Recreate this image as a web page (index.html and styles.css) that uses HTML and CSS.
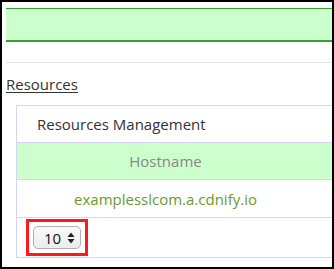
FILE: index.html
```html
<!DOCTYPE html>
<html lang="en">
  <head>
    <meta charset="UTF-8" />
    <meta name="viewport" content="width=device-width, initial-scale=1.0" />
    <title>Resources</title>
    <link rel="stylesheet" href="styles.css">
  </head>
  <body>
    <div class="frame">
      <!-- status banner -->
      <div class="banner"></div>

      <hr class="divider" />

      <a class="section-link" href="#">Resources</a>

      <table class="resources">
        <tr>
          <td class="title-cell">Resources Management</td>
        </tr>
        <tr>
          <th class="head-cell">Hostname</th>
        </tr>
        <tr>
          <td class="host-cell">examplesslcom.a.cdnify.io</td>
        </tr>
        <tr>
          <td class="foot-cell">
            <div class="highlight">
              <div class="page-size">
                <span>10</span>
                <svg class="arrows" width="8" height="12" viewBox="0 0 8 12">
                  <path d="M4 0.5 L7.5 5 L0.5 5 Z" fill="#222" />
                  <path d="M4 11.5 L7.5 7 L0.5 7 Z" fill="#222" />
                </svg>
              </div>
            </div>
          </td>
        </tr>
      </table>
    </div>
  </body>
</html>
```

FILE: styles.css
```css
body {
  margin: 0;
  padding: 0;
  background-color: white;
  font-family: "Open Sans", Arial, sans-serif;
}

.frame {
  width: 334px;
  height: 269px;
  box-sizing: border-box;
  border: 2px solid black;
  padding: 6px 0 0 4px;
  overflow: hidden;
}

.banner {
  height: 31px;
  background-color: #ccffcc;
  border-top: 1px solid #35a035;
  border-bottom: 2px solid #35a035;
}

.divider {
  margin: 20px 0 0 0;
  border: none;
  border-top: 1px solid #e4e4e4;
  height: 0;
}

.section-link {
  display: inline-block;
  margin-top: 11px;
  font-size: 15px;
  color: #333;
  text-decoration: underline;
  text-underline-offset: 2px;
}

.resources {
  margin: 10px 0 0 10px;
  width: 330px;
  border-collapse: collapse;
  border: 1px solid #d4d4f7;
  border-right: none;
}

.resources td,
.resources th {
  border-top: 1px solid #d4d4f7;
  padding: 0;
}

.title-cell {
  height: 36px;
  padding-left: 20px !important;
  font-size: 15px;
  color: #333;
}

.head-cell {
  height: 36px;
  background-color: #ccffcc;
  font-weight: normal;
  font-size: 15px;
  color: #888;
  text-align: center;
  padding-right: 32px !important;
  border-bottom: 1px dotted #c8c8ee;
}

.host-cell {
  height: 37px;
  text-align: center;
  padding-right: 32px !important;
  font-size: 15px;
  color: #6b9a2c;
}

.foot-cell {
  height: 38px;
  vertical-align: top;
  padding: 1px 0 0 9px !important;
}

.highlight {
  display: inline-block;
  border: 3px solid #ff1a1a;
  padding: 4px 4px;
}

.page-size {
  width: 48px;
  height: 23px;
  box-sizing: border-box;
  display: flex;
  align-items: center;
  justify-content: space-between;
  padding: 0 5px 0 10px;
  border: 1px solid #b0b0b0;
  border-radius: 5px;
  background: linear-gradient(#fafafa, #ececec);
  font-size: 15px;
  color: #111;
}

.arrows {
  display: block;
}
```
